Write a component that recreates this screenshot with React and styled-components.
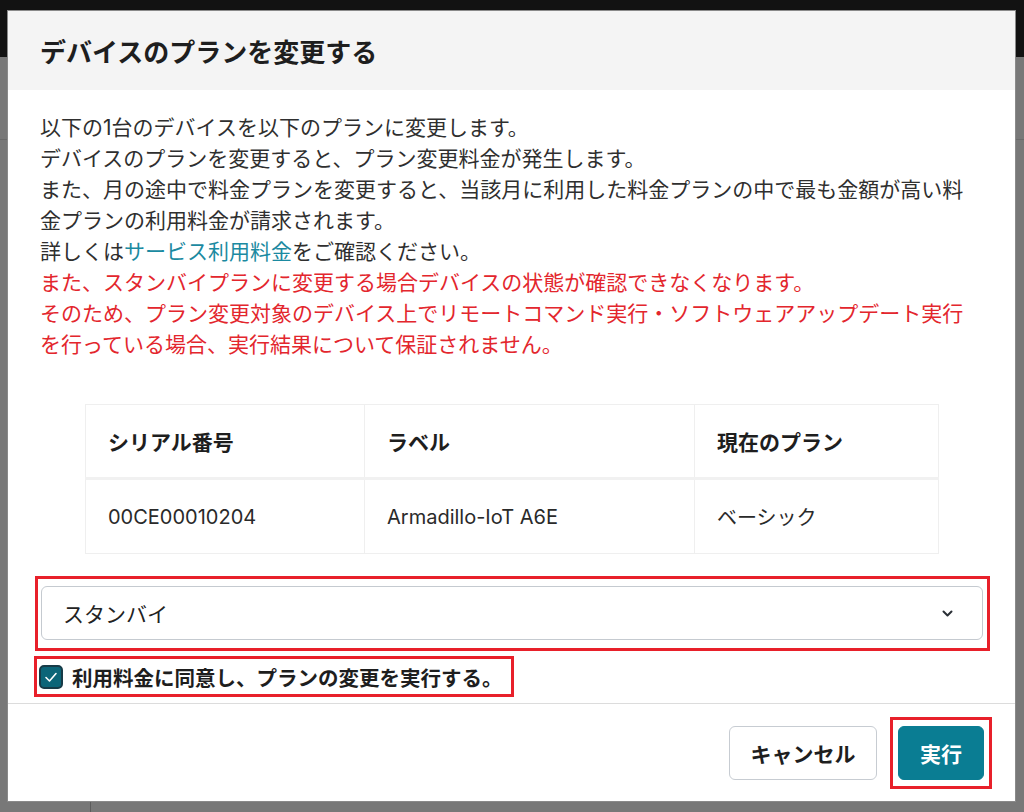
import React from "react";
import styled, { createGlobalStyle } from "styled-components";

const GlobalStyle = createGlobalStyle`
  html, body { margin: 0; padding: 0; }
  body {
    width: 1024px;
    height: 812px;
    overflow: hidden;
    background: #787878;
    font-family: Inter, "Noto Sans CJK JP", "Noto Sans", sans-serif;
    color: #2f2f2f;
  }
`;

const Page = styled.div`
  position: relative;
  width: 1024px;
  height: 812px;
  display: flex;
  flex-direction: column;
  background: #787878;
`;

const PageHeader = styled.div`
  height: 57px;
  background: #121212;
  flex-shrink: 0;
`;

const PageBody = styled.div`
  flex: 1;
  display: grid;
  grid-template-columns: 91px 1fr;
  grid-template-rows: 83px 1fr;
`;

const PageRule = styled.div`
  grid-column: 1 / 3;
  border-bottom: 1px solid #6a6a6a;
`;

const PageSide = styled.div`
  border-right: 1px solid #5c5c5c;
`;

const Dialog = styled.div`
  position: absolute;
  top: 11px;
  left: 8px;
  width: 1007px;
  height: 790px;
  background: #fff;
  display: flex;
  flex-direction: column;
  box-shadow: 0 0 0 1px #8a8a8a;
`;

const Header = styled.div`
  height: 79px;
  background: #f4f4f4;
  display: flex;
  align-items: center;
  padding: 0 32px;
  flex-shrink: 0;
`;

const Title = styled.h2`
  margin: 0;
  font-size: 26px;
  font-weight: 700;
  color: #1e1e1e;
`;

const Body = styled.div`
  flex: 1;
  padding: 22px 40px 6px 32px;
  display: flex;
  flex-direction: column;
`;

const Message = styled.p`
  margin: 0;
  font-size: 21px;
  line-height: 31px;
  color: ${(p) => (p.$warn ? "#e3262d" : "#2f2f2f")};
`;

const Link = styled.a`
  color: #1b8aa1;
  text-decoration: none;
`;

const Table = styled.table`
  margin: 44px 0 0 45px;
  width: 853px;
  border-collapse: collapse;
  table-layout: fixed;
`;

const Th = styled.th`
  height: 72px;
  padding: 0 22px;
  text-align: left;
  font-size: 21px;
  font-weight: 700;
  color: #1e1e1e;
  border: 1px solid #efefef;
  border-bottom: 3px solid #f1f1f1;
`;

const Td = styled.td`
  height: 73px;
  padding: 0 22px;
  font-size: 20px;
  color: #2a2a2a;
  border: 1px solid #efefef;
`;

const Callout = styled.div`
  border: 3px solid #e8202a;
  padding: ${(p) => p.$pad};
  align-self: flex-start;
  display: flex;
  align-items: center;
  margin-top: ${(p) => p.$top || "0px"};
  margin-left: ${(p) => p.$left || "0px"};
  width: ${(p) => p.$width || "auto"};
  box-sizing: border-box;
`;

const Select = styled.div`
  flex: 1;
  height: 54px;
  box-sizing: border-box;
  border: 1px solid #c5cad0;
  border-radius: 6px;
  display: flex;
  align-items: center;
  justify-content: space-between;
  padding: 0 29px 0 21px;
  font-size: 21px;
  color: #222;
`;

const CheckRow = styled.label`
  display: flex;
  align-items: center;
  gap: 9px;
  height: 35px;
  font-size: 20.5px;
  font-weight: 700;
  color: #1e1e1e;
`;

const CheckBox = styled.span`
  width: 24px;
  height: 24px;
  box-sizing: border-box;
  border-radius: 5px;
  background: #0c6578;
  border: 2px solid #173b47;
  display: flex;
  align-items: center;
  justify-content: center;
`;

const Footer = styled.div`
  border-top: 1px solid #dcdcdc;
  padding: 13px 23px 12px;
  display: flex;
  justify-content: flex-end;
  align-items: center;
  gap: 13px;
`;

const Button = styled.button`
  height: 54px;
  box-sizing: border-box;
  padding: 0;
  white-space: nowrap;
  border-radius: 6px;
  border: 1px solid ${(p) => (p.$primary ? "#0a7d93" : "#c7ccd2")};
  background: ${(p) => (p.$primary ? "#0a7d93" : "#fff")};
  color: ${(p) => (p.$primary ? "#fff" : "#1e1e1e")};
  font-family: inherit;
  font-size: 21px;
  font-weight: 700;
  width: ${(p) => p.$w};
`;

export default function App() {
  return (
    <>
      <GlobalStyle />
      <Page>
        <PageHeader />
        <PageBody>
          <PageRule />
          <PageSide />
        </PageBody>
        <Dialog>
          <Header>
            <Title>デバイスのプランを変更する</Title>
          </Header>
          <Body>
            <Message>以下の1台のデバイスを以下のプランに変更します。</Message>
            <Message>デバイスのプランを変更すると、プラン変更料金が発生します。</Message>
            <Message>
              また、月の途中で料金プランを変更すると、当該月に利用した料金プランの中で最も金額が高い料金プランの利用料金が請求されます。
            </Message>
            <Message>
              詳しくは<Link href="#">サービス利用料金</Link>をご確認ください。
            </Message>
            <Message $warn>
              また、スタンバイプランに変更する場合デバイスの状態が確認できなくなります。
            </Message>
            <Message $warn>
              そのため、プラン変更対象のデバイス上でリモートコマンド実行・ソフトウェアアップデート実行を行っている場合、実行結果について保証されません。
            </Message>
            <Table>
              <colgroup>
                <col style={{ width: "279px" }} />
                <col style={{ width: "330px" }} />
                <col style={{ width: "244px" }} />
              </colgroup>
              <thead>
                <tr>
                  <Th>シリアル番号</Th>
                  <Th>ラベル</Th>
                  <Th>現在のプラン</Th>
                </tr>
              </thead>
              <tbody>
                <tr>
                  <Td>00CE00010204</Td>
                  <Td>Armadillo-IoT A6E</Td>
                  <Td>ベーシック</Td>
                </tr>
              </tbody>
            </Table>
            <Callout $pad="7px 4px 8px 3px" $top="22px" $left="-5px" $width="955px">
              <Select>
                <span>スタンバイ</span>
                <svg width="11" height="7" viewBox="0 0 11 7">
                  <path d="M1.5 1.5 L5.5 5.5 L9.5 1.5" fill="none" stroke="#2a2f36" strokeWidth="2" strokeLinecap="round" strokeLinejoin="round" />
                </svg>
              </Select>
            </Callout>
            <Callout $pad="0 8px 0 2px" $top="5px" $left="-6px">
              <CheckRow>
                <CheckBox>
                  <svg width="16" height="16" viewBox="0 0 16 16">
                    <path d="M3 8.5 L6.5 12 L13 4.5" fill="none" stroke="#fff" strokeWidth="1.6" strokeLinecap="round" strokeLinejoin="round" />
                  </svg>
                </CheckBox>
                利用料金に同意し、プランの変更を実行する。
              </CheckRow>
            </Callout>
          </Body>
          <Footer>
            <Button $w="148px">キャンセル</Button>
            <Callout $pad="6px 5px">
              <Button $primary $w="86px">実行</Button>
            </Callout>
          </Footer>
        </Dialog>
      </Page>
    </>
  );
}
